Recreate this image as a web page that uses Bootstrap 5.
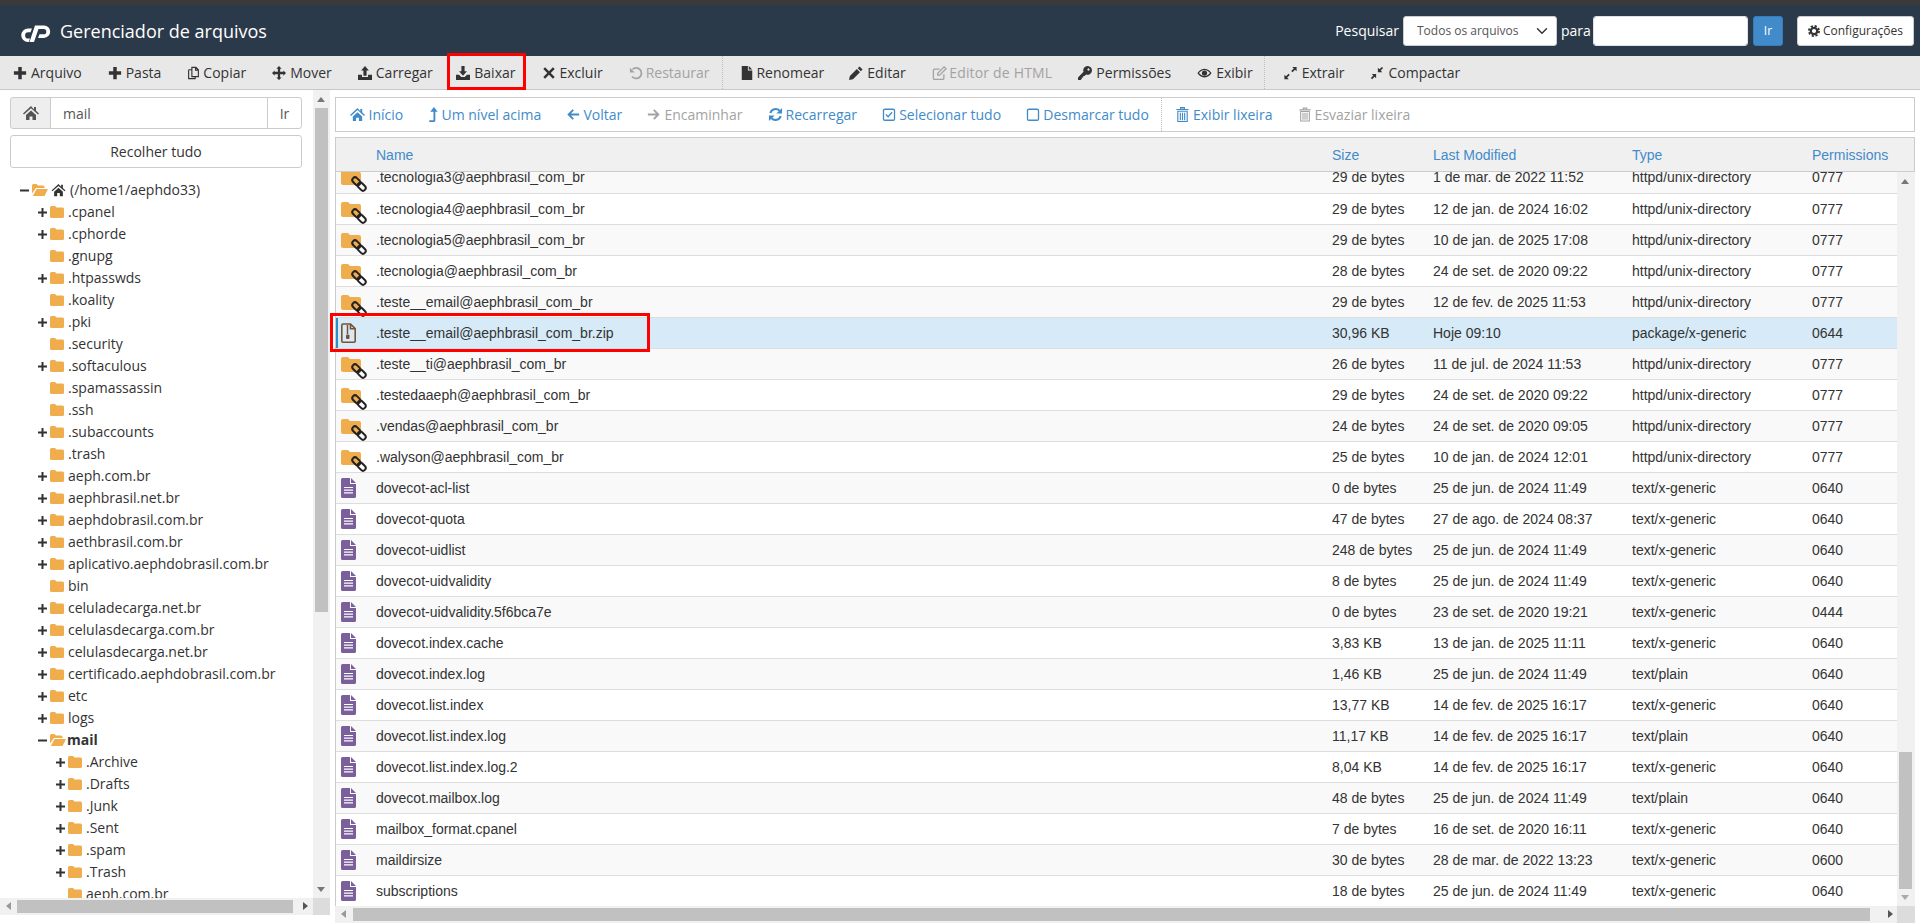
<!DOCTYPE html>
<html lang="pt-BR">
<head>
<meta charset="utf-8">
<title>Gerenciador de arquivos</title>
<link href="https://cdn.jsdelivr.net/npm/bootstrap@5.3.0/dist/css/bootstrap.min.css" rel="stylesheet">
<style>
html,body{height:923px;overflow:hidden}
body{font-family:"Open Sans",sans-serif;font-size:14px;color:#333;background:#fff;line-height:20px}
.sprites{position:absolute;width:0;height:0}
.top-strip{height:5px;background:#3a3a3a}
.fm-head{height:51px;background:#2b3a4a;color:#fff;padding:0 6px 0 21px}
.fm-logo{width:30px;height:17px;fill:#fff;margin:6px 9px 0 0}
.fm-title{font-size:18px;line-height:24px;font-weight:400}
.fm-search{gap:4px;font-size:14px}
.lb-para{width:28px;white-space:nowrap}
.fm-search .form-select{width:154px;flex:none;height:30px;font-size:12px;padding:0 24px 0 13px;border-radius:3px;color:#555;font-family:"Open Sans",sans-serif;border-color:#ccc;background-position:right 6px center}
.fm-search .form-control{width:155px;flex:none;height:30px;border-radius:3px;padding:0 8px}
.go-btn{width:30px;height:30px;padding:0;font-size:12px;border-radius:3px;background:#428bca;border-color:#357ebd;color:#fff;margin-left:1px}
.cfg-btn{width:117px;height:30px;padding:0;font-size:12px;border-radius:3px;background:#fff;border-color:#ccc;color:#333;margin-left:10px}
.cfg-btn svg{width:12px;height:12px;margin-right:3px;vertical-align:-2px;fill:#333}
.fm-tools{height:34px;background:#e8e8e8;border-bottom:1px solid #c8c8c8;padding-left:0}
.tb-btn{height:33px;padding:0 13px;border:0;border-radius:0;font-size:14px;line-height:33px;color:#333;white-space:nowrap;display:flex;align-items:center}
.tb-btn svg{width:14px;height:14px;margin-right:4px;fill:currentColor;flex:none}
.tb-btn .ic-copy{width:13px;margin-right:3px}
.tb-btn .ic-file{width:12px;margin-right:3px}
.tb-btn .ic-edit{width:15px;margin-right:2.5px}
.tb-btn .ic-eye,.tb-btn .ic-exp{width:15px}
.tb-btn .ic-x{margin-right:3px}
.tb-btn .ic-undo{margin-right:3px}
.tb-btn.tight-r{padding-right:12px}
.tb-btn.tighter-r{padding-right:11px}
.tb-btn.wide-txt{letter-spacing:.18px}
.tb-btn.off,.act-btn.off{color:#a3a3a3;opacity:1}
.tb-sep{width:0;height:33px;border-left:1px dotted #bdbdbd;margin:0 5px 0 0}
.tb-btn.hl-box{outline:3px solid #f00;outline-offset:0;height:31px;align-self:flex-start;padding:2px 8px 0 6px;margin:0 6px 0 4.5px;position:relative}
.fm-main{height:833px}
.side{width:335px;padding-right:5px;flex:none}
.side-body{height:808px}
.side-inner{width:313px;overflow:hidden}
.path-grp{margin:7px 11px 6px 10px;height:32px;width:292px}
.path-grp .input-group-text{width:41px;justify-content:center;background:#eee;border-color:#ccc;border-radius:3px 0 0 3px;padding:0;color:#555}
.path-grp .input-group-text svg{width:16px;height:16px;fill:#555}
.path-grp .form-control{font-size:14px;color:#555;padding:0 12px;border-color:#ccc;height:32px}
.path-grp .btn{width:35px;padding:0;font-size:14px;color:#555;background:#fff;border:1px solid #ccc;border-radius:0 3px 3px 0}
.collapse-btn{display:block;width:292px;height:33px;margin:0 0 0 10px;padding:0;background:#fff;border:1px solid #ccc;border-radius:3px;font-size:14px;color:#333}
.tree-list{margin-top:11px;height:719px;overflow:hidden}
.tr-row{height:22px;white-space:nowrap;color:#333;display:flex;align-items:center}
.lv0{padding-left:20px}.lv1{padding-left:38px}.lv2{padding-left:56px}
.tg{width:9px;height:9px;margin-right:3px;flex:none;stroke:#333;stroke-width:2}
.fd{width:14px;height:12px;margin-right:4px;fill:#f0ad4e;flex:none}
.fdo{width:16px;height:12px;margin-right:1px;fill:#f0ad4e;flex:none}
.hm{width:15px;height:14px;margin:0 4px 0 2px;fill:#333;flex:none}
.vbar{width:17px;background:#f1f1f1;flex:none;position:relative}
.vbar .thumb{position:absolute;left:2px;width:13px;background:#c1c1c1}
.hbar{height:17px;background:#f1f1f1;position:relative;flex:none}
.hbar .thumb{position:absolute;top:2px;height:13px;background:#c1c1c1}
.ar{position:absolute;width:0;height:0;border-style:solid;border-color:transparent}
.ar-up{left:4px;top:7px;border-width:0 4px 5px;border-bottom-color:#777}
.ar-dn{left:4px;bottom:6px;border-width:5px 4px 0;border-top-color:#777}
.ar-lt{left:6px;top:4px;border-width:4px 5px 4px 0;border-right-color:#999}
.ar-rt{top:4px;border-width:4px 0 4px 5px;border-left-color:#555}
.corner{position:absolute;right:0;top:0;width:17px;height:17px;background:#dcdcdc}
.corner.wide{width:18px}
.side-foot{height:8px}
.pane{padding-top:7px;width:1580px;flex:none}
.act-bar{height:35px;border:1px solid #ccc;margin-bottom:5px;padding-left:0;background:#fff}
.act-btn{height:33px;padding:0 12.6px;border:0;border-radius:0;font-size:14px;color:#428bca;white-space:nowrap;display:flex;align-items:center}
.act-btn svg{width:14px;height:15px;margin-right:3px;fill:currentColor;flex:none}
.act-btn .ic-hm{width:17px}
.act-btn .ic-lv{width:10px}
.act-btn .ic-15{width:15px}
.act-sep{height:33px;border-left:1px dotted #bdbdbd}
.thead-bar{height:35px;background:#f0f0f0;border:1px solid #ccc;border-bottom:1px solid #ccc}
.grid-tbl{table-layout:fixed;width:1561px;margin:0;font-family:"Liberation Sans",sans-serif;font-size:14px;color:#333;--bs-table-striped-bg:#f9f9f9;--bs-table-bg:transparent;--bs-table-accent-bg:transparent;--bs-table-color:#333;--bs-table-striped-color:#333;border-color:#ddd}
.grid-tbl td{height:31px;padding:0;vertical-align:middle;border-bottom:1px solid #ddd;white-space:nowrap;line-height:20px}
.hd-tbl{table-layout:fixed;width:1578px;font-family:"Liberation Sans",sans-serif;font-size:14px}
.hd-tbl th{height:33px;padding:0;font-weight:400;color:#428bca;vertical-align:middle}
.cw-i{width:40px}.cw-n{width:956px}.cw-s{width:101px}.cw-m{width:199px}.cw-t{width:180px}
.scroll-wrap{height:734px;border-left:1px solid #ccc;position:relative}
.scroll-pane{overflow:hidden;position:relative;width:1561px}
.scroll-shift{margin-top:-10px}
.rw-ico{display:block;margin:0 0 -1px 5px}
.ico-link{width:26px;height:31px}
.ico-txt,.ico-zip{width:15px;height:31px}
tr.pick>td{background:#d6eaf8!important;box-shadow:none!important}
tr.pick>td:first-child{box-shadow:inset 2px 0 0 #2a8fc9!important}
.zip-mark{position:absolute;left:-6px;top:141px;width:320px;height:39px;border:3px solid #f00;pointer-events:none}
.vbar18{width:18px}
</style>
</head>
<body>
<svg class="sprites" xmlns="http://www.w3.org/2000/svg">
<defs>
<symbol id="i-plus" viewBox="0 0 16 16"><path d="M6 1h4v5h5v4h-5v5H6v-5H1V6h5z"/></symbol>
<symbol id="i-copy" viewBox="0 0 16 16"><path d="M6 1h5l3 3v8.5H6z M2 4h4 M2 4v11h8v-2.500 M10.500 1v3.500H14" fill="none" stroke="currentColor" stroke-width="1.400"/></symbol>
<symbol id="i-move" viewBox="0 0 16 16"><path d="M8 0l3 3H9.300v3.700H13V5l3 3-3 3V9.300H9.300V13H11l-3 3-3-3h1.700V9.300H3V11L0 8l3-3v1.700h3.700V3H5z"/></symbol>
<symbol id="i-up" viewBox="0 0 16 16"><path d="M8 0l4.500 5H9.800v6H6.200V5H3.500z M0 10h4.500v2.500h7V10H16v6H0z"/></symbol>
<symbol id="i-down" viewBox="0 0 16 16"><path d="M6.200 0h3.600v6h2.700L8 11 3.500 6h2.700z M0 10h3.500L6 12.500h4L12.500 10H16v6H0z"/></symbol>
<symbol id="i-x" viewBox="0 0 16 16"><path d="M3.500 1.500L8 6l4.500-4.500 2 2L10 8l4.500 4.500-2 2L8 10l-4.500 4.500-2-2L6 8 1.500 3.500z"/></symbol>
<symbol id="i-undo" viewBox="0 0 16 16"><path d="M4 4A6 6 0 1 1 3.500 12" fill="none" stroke="currentColor" stroke-width="2"/><path d="M1 2v5.500h5.500z"/></symbol>
<symbol id="i-file" viewBox="0 0 12 16"><path d="M0 0h7v5h5v11H0z M8 0l4 4H8z"/></symbol>
<symbol id="i-pencil" viewBox="0 0 16 16"><path d="M12 .5l3.500 3.500-2 2L10 2.500z M9 3.500L12.500 7 4.500 15 0 16l1-4.500z"/></symbol>
<symbol id="i-edit" viewBox="0 0 16 16"><path d="M13 9.500V14a1.300 1.300 0 0 1-1.300 1.300H2.300A1.300 1.300 0 0 1 1 14V4.800a1.300 1.300 0 0 1 1.300-1.300H8" fill="none" stroke="currentColor" stroke-width="1.500"/><path d="M13.300 1l2.200 2.200L8.200 10.500H6V8.300z" fill="none" stroke="currentColor" stroke-width="1.500"/></symbol>
<symbol id="i-key" viewBox="0 0 16 16"><path fill-rule="evenodd" d="M11 0a5 5 0 1 1-1.800 9.700L7.500 11.400H6V13H4.400v1.600L3 16H0v-3l6.300-6.300A5 5 0 0 1 11 0z M12 2.700a1.300 1.300 0 1 0 .01 0z"/></symbol>
<symbol id="i-eye" viewBox="0 0 16 16"><path fill-rule="evenodd" d="M8 3C4 3 1.200 5.800 0 8c1.200 2.200 4 5 8 5s6.800-2.800 8-5c-1.200-2.200-4-5-8-5z M8 4.500c2.800 0 5 1.800 6.300 3.500-1.300 1.700-3.500 3.500-6.300 3.500S3 9.700 1.700 8C3 6.300 5.200 4.500 8 4.500z"/><circle cx="8" cy="8" r="3"/></symbol>
<symbol id="i-expand" viewBox="0 0 16 16"><path d="M10 1h5v5l-1.800-1.800-3 3-1.400-1.400 3-3z M6 15H1v-5l1.800 1.800 3-3 1.400 1.400-3 3z"/></symbol>
<symbol id="i-compress" viewBox="0 0 16 16"><path d="M9 7V2l1.800 1.800L13.600 1 15 2.400l-2.800 2.800L14 7z M7 9v5l-1.800-1.800L2.400 15 1 13.600l2.800-2.800L2 9z"/></symbol>
<symbol id="i-gear" viewBox="0 0 16 16"><circle cx="8" cy="8" r="4.300" fill="none" stroke="currentColor" stroke-width="3"/><circle cx="8" cy="8" r="6.800" fill="none" stroke="currentColor" stroke-width="2.400" stroke-dasharray="3 2.340"/></symbol>
<symbol id="i-home" viewBox="0 0 16 16"><path d="M8 1L0 8.500l1 1L8 3.300l7 6.200 1-1-3-2.800V2h-2v2.400z M3 10l5-4.500 5 4.500v5H9.500v-3.500h-3V15H3z"/></symbol>
<symbol id="i-level" viewBox="0 0 10 16"><path d="M6 0l4 5H7.500v9.500A1.500 1.500 0 0 1 6 16H1v-2h4.500V5H2z"/></symbol>
<symbol id="i-left" viewBox="0 0 16 16"><path d="M7.500 2L9 3.500 5.700 6.800H15v2.400H5.700L9 12.500 7.500 14 1.500 8z"/></symbol>
<symbol id="i-right" viewBox="0 0 16 16"><path d="M8.500 2L7 3.500l3.300 3.300H1v2.400h9.300L7 12.500 8.500 14l6-6z"/></symbol>
<symbol id="i-refresh" viewBox="0 0 16 16"><path d="M2.500 6.500A5.800 5.800 0 0 1 12.300 4 M13.500 9.500A5.800 5.800 0 0 1 3.700 12" fill="none" stroke="currentColor" stroke-width="2.200"/><path d="M15 1v6H9z M1 15V9h6z"/></symbol>
<symbol id="i-check" viewBox="0 0 16 16"><rect x="1.700" y="2" width="12.600" height="12.600" rx="1.500" fill="none" stroke="currentColor" stroke-width="1.500"/><path d="M4.500 8l2.500 2.500 4.500-5" fill="none" stroke="currentColor" stroke-width="1.500"/></symbol>
<symbol id="i-square" viewBox="0 0 16 16"><rect x="1.700" y="2" width="12.600" height="12.600" rx="1.500" fill="none" stroke="currentColor" stroke-width="1.500"/></symbol>
<symbol id="i-trash" viewBox="0 0 16 16"><path d="M6 .7h4v1.800H6z M1.500 2.700h13 M3 4.500h10V15.500H3z M5.700 6v8 M8 6v8 M10.300 6v8" fill="none" stroke="currentColor" stroke-width="1.200"/></symbol>
<symbol id="i-folder" viewBox="0 0 14 12"><path d="M0 1.500A1.500 1.500 0 0 1 1.500 0h3.500l1.500 1.500h6A1.500 1.500 0 0 1 14 3v7.500a1.500 1.500 0 0 1-1.500 1.500h-11A1.500 1.500 0 0 1 0 10.500z"/></symbol>
<symbol id="i-folder-open" viewBox="0 0 16 12"><path d="M0 1.500A1.500 1.500 0 0 1 1.500 0h3L6 1.500h5A1.500 1.500 0 0 1 12.500 3v1H4L0 9.500z M4.600 5H16l-3.500 7H.8z"/></symbol>
<symbol id="i-tp" viewBox="0 0 9 9"><path d="M0 4.500h9 M4.500 0v9"/></symbol>
<symbol id="i-tm" viewBox="0 0 9 9"><path d="M0 4.500h9"/></symbol>
<symbol id="i-flink" viewBox="0 0 26 31"><path fill="#f0ad4e" d="M0 10a2 2 0 0 1 2-2h5l2 2h9a2 2 0 0 1 2 2v9a2 2 0 0 1-2 2H2a2 2 0 0 1-2-2z"/><g fill="none" stroke="#222" stroke-width="2"><rect x="10.800" y="16.600" width="9" height="5.400" rx="2.700" transform="rotate(45 15.300 19.300)"/><rect x="16.200" y="22" width="9" height="5.400" rx="2.700" transform="rotate(45 20.700 24.700)"/></g></symbol>
<symbol id="i-ftxt" viewBox="0 0 15 31"><path fill="#7a5f9a" d="M1.500 5H9v6h6v12.500a1.500 1.500 0 0 1-1.500 1.500h-12A1.500 1.500 0 0 1 0 23.500v-17A1.500 1.500 0 0 1 1.500 5z M10 5l5 5h-5z"/><path stroke="#fff" stroke-width="1.200" d="M3 14.500h9 M3 17.200h9 M3 19.900h9"/></symbol>
<symbol id="i-fzip" viewBox="0 0 15 31"><path fill="none" stroke="#7a5230" stroke-width="1.600" d="M2 6h7.500l4.700 4.700V23a1.200 1.200 0 0 1-1.200 1.200H2A1.200 1.200 0 0 1 .8 23V7.200A1.200 1.200 0 0 1 2 6z M9.500 6v4.700h4.700"/><path stroke="#7a5230" stroke-width="1.500" d="M6.500 7v9"/><rect x="5" y="16.500" width="3.500" height="4.500" rx="1" fill="#7a5230"/></symbol>
</defs>
</svg>

<div class="top-strip"></div>
<header class="fm-head d-flex align-items-center justify-content-between">
  <div class="d-flex align-items-center">
    <svg class="fm-logo" viewBox="0 0 30 17"><path d="M11 3.500H7A6.700 6.700 0 0 0 7 17h.8L9 13.500H7.200a3.100 3.100 0 0 1 0-6.200H9.500z M14 .5h9a6.200 6.200 0 0 1 0 12.400h-6l1.500-3.600h4.200a2.600 2.600 0 0 0 0-5.200h-5.200L13 17H8.500z"/></svg>
    <span class="fm-title">Gerenciador de arquivos</span>
  </div>
  <form class="fm-search d-flex align-items-center m-0">
    <label>Pesquisar</label>
    <select class="form-select"><option>Todos os arquivos</option></select>
    <label class="lb-para">para</label>
    <input class="form-control" type="text">
    <button type="button" class="btn go-btn">Ir</button>
    <button type="button" class="btn cfg-btn"><svg><use href="#i-gear"/></svg>Configurações</button>
  </form>
</header>
<nav class="fm-tools d-flex align-items-center">
  <button class="btn tb-btn"><svg><use href="#i-plus"/></svg>Arquivo</button>
  <button class="btn tb-btn"><svg><use href="#i-plus"/></svg>Pasta</button>
  <button class="btn tb-btn"><svg class="ic-copy"><use href="#i-copy"/></svg>Copiar</button>
  <button class="btn tb-btn"><svg><use href="#i-move"/></svg>Mover</button>
  <button class="btn tb-btn"><svg><use href="#i-up"/></svg>Carregar</button>
  <button class="btn tb-btn hl-box"><svg><use href="#i-down"/></svg>Baixar</button>
  <button class="btn tb-btn"><svg class="ic-x"><use href="#i-x"/></svg>Excluir</button>
  <button class="btn tb-btn off"><svg class="ic-undo"><use href="#i-undo"/></svg>Restaurar</button>
  <span class="tb-sep"></span>
  <button class="btn tb-btn tight-r"><svg class="ic-file"><use href="#i-file"/></svg>Renomear</button>
  <button class="btn tb-btn"><svg><use href="#i-pencil"/></svg>Editar</button>
  <button class="btn tb-btn off wide-txt"><svg class="ic-edit"><use href="#i-edit"/></svg>Editor de HTML</button>
  <button class="btn tb-btn"><svg><use href="#i-key"/></svg>Permissões</button>
  <button class="btn tb-btn tighter-r"><svg class="ic-eye"><use href="#i-eye"/></svg>Exibir</button>
  <span class="tb-sep"></span>
  <button class="btn tb-btn"><svg class="ic-exp"><use href="#i-expand"/></svg>Extrair</button>
  <button class="btn tb-btn"><svg><use href="#i-compress"/></svg>Compactar</button>
</nav>

<main class="fm-main d-flex">
  <aside class="side d-flex flex-column">
    <div class="side-body d-flex">
      <div class="side-inner">
        <div class="input-group path-grp">
          <span class="input-group-text"><svg><use href="#i-home"/></svg></span>
          <input class="form-control" type="text" value="mail">
          <button class="btn" type="button">Ir</button>
        </div>
        <button class="btn collapse-btn" type="button">Recolher tudo</button>
        <div class="tree-list">
          <div class="tr-row lv0"><svg class="tg"><use href="#i-tm"/></svg><svg class="fdo"><use href="#i-folder-open"/></svg><svg class="hm"><use href="#i-home"/></svg>(/home1/aephdo33)</div>
          <div class="tr-row lv1"><svg class="tg"><use href="#i-tp"/></svg><svg class="fd"><use href="#i-folder"/></svg>.cpanel</div>
          <div class="tr-row lv1"><svg class="tg"><use href="#i-tp"/></svg><svg class="fd"><use href="#i-folder"/></svg>.cphorde</div>
          <div class="tr-row lv1"><svg class="tg"></svg><svg class="fd"><use href="#i-folder"/></svg>.gnupg</div>
          <div class="tr-row lv1"><svg class="tg"><use href="#i-tp"/></svg><svg class="fd"><use href="#i-folder"/></svg>.htpasswds</div>
          <div class="tr-row lv1"><svg class="tg"></svg><svg class="fd"><use href="#i-folder"/></svg>.koality</div>
          <div class="tr-row lv1"><svg class="tg"><use href="#i-tp"/></svg><svg class="fd"><use href="#i-folder"/></svg>.pki</div>
          <div class="tr-row lv1"><svg class="tg"></svg><svg class="fd"><use href="#i-folder"/></svg>.security</div>
          <div class="tr-row lv1"><svg class="tg"><use href="#i-tp"/></svg><svg class="fd"><use href="#i-folder"/></svg>.softaculous</div>
          <div class="tr-row lv1"><svg class="tg"></svg><svg class="fd"><use href="#i-folder"/></svg>.spamassassin</div>
          <div class="tr-row lv1"><svg class="tg"></svg><svg class="fd"><use href="#i-folder"/></svg>.ssh</div>
          <div class="tr-row lv1"><svg class="tg"><use href="#i-tp"/></svg><svg class="fd"><use href="#i-folder"/></svg>.subaccounts</div>
          <div class="tr-row lv1"><svg class="tg"></svg><svg class="fd"><use href="#i-folder"/></svg>.trash</div>
          <div class="tr-row lv1"><svg class="tg"><use href="#i-tp"/></svg><svg class="fd"><use href="#i-folder"/></svg>aeph.com.br</div>
          <div class="tr-row lv1"><svg class="tg"><use href="#i-tp"/></svg><svg class="fd"><use href="#i-folder"/></svg>aephbrasil.net.br</div>
          <div class="tr-row lv1"><svg class="tg"><use href="#i-tp"/></svg><svg class="fd"><use href="#i-folder"/></svg>aephdobrasil.com.br</div>
          <div class="tr-row lv1"><svg class="tg"><use href="#i-tp"/></svg><svg class="fd"><use href="#i-folder"/></svg>aethbrasil.com.br</div>
          <div class="tr-row lv1"><svg class="tg"><use href="#i-tp"/></svg><svg class="fd"><use href="#i-folder"/></svg>aplicativo.aephdobrasil.com.br</div>
          <div class="tr-row lv1"><svg class="tg"></svg><svg class="fd"><use href="#i-folder"/></svg>bin</div>
          <div class="tr-row lv1"><svg class="tg"><use href="#i-tp"/></svg><svg class="fd"><use href="#i-folder"/></svg>celuladecarga.net.br</div>
          <div class="tr-row lv1"><svg class="tg"><use href="#i-tp"/></svg><svg class="fd"><use href="#i-folder"/></svg>celulasdecarga.com.br</div>
          <div class="tr-row lv1"><svg class="tg"><use href="#i-tp"/></svg><svg class="fd"><use href="#i-folder"/></svg>celulasdecarga.net.br</div>
          <div class="tr-row lv1"><svg class="tg"><use href="#i-tp"/></svg><svg class="fd"><use href="#i-folder"/></svg>certificado.aephdobrasil.com.br</div>
          <div class="tr-row lv1"><svg class="tg"><use href="#i-tp"/></svg><svg class="fd"><use href="#i-folder"/></svg>etc</div>
          <div class="tr-row lv1"><svg class="tg"><use href="#i-tp"/></svg><svg class="fd"><use href="#i-folder"/></svg>logs</div>
          <div class="tr-row lv1 fw-bold"><svg class="tg"><use href="#i-tm"/></svg><svg class="fdo"><use href="#i-folder-open"/></svg>mail</div>
          <div class="tr-row lv2"><svg class="tg"><use href="#i-tp"/></svg><svg class="fd"><use href="#i-folder"/></svg>.Archive</div>
          <div class="tr-row lv2"><svg class="tg"><use href="#i-tp"/></svg><svg class="fd"><use href="#i-folder"/></svg>.Drafts</div>
          <div class="tr-row lv2"><svg class="tg"><use href="#i-tp"/></svg><svg class="fd"><use href="#i-folder"/></svg>.Junk</div>
          <div class="tr-row lv2"><svg class="tg"><use href="#i-tp"/></svg><svg class="fd"><use href="#i-folder"/></svg>.Sent</div>
          <div class="tr-row lv2"><svg class="tg"><use href="#i-tp"/></svg><svg class="fd"><use href="#i-folder"/></svg>.spam</div>
          <div class="tr-row lv2"><svg class="tg"><use href="#i-tp"/></svg><svg class="fd"><use href="#i-folder"/></svg>.Trash</div>
          <div class="tr-row lv2"><svg class="tg"></svg><svg class="fd"><use href="#i-folder"/></svg>aeph.com.br</div>
        </div>
      </div>
      <div class="vbar flex-grow-0" aria-hidden="true">
        <span class="ar ar-up"></span>
        <span class="thumb" style="top:18px;height:504px"></span>
        <span class="ar ar-dn"></span>
      </div>
    </div>
    <div class="hbar" aria-hidden="true">
      <span class="ar ar-lt"></span>
      <span class="thumb" style="left:17px;width:276px"></span>
      <span class="ar ar-rt" style="left:303px"></span>
      <span class="corner"></span>
    </div>
    <div class="side-foot"></div>
  </aside>

  <section class="pane d-flex flex-column">
    <div class="act-bar d-flex align-items-center">
      <button class="btn act-btn"><svg class="ic-hm"><use href="#i-home"/></svg>Início</button>
      <button class="btn act-btn"><svg class="ic-lv"><use href="#i-level"/></svg>Um nível acima</button>
      <button class="btn act-btn"><svg><use href="#i-left"/></svg>Voltar</button>
      <button class="btn act-btn off"><svg><use href="#i-right"/></svg>Encaminhar</button>
      <button class="btn act-btn"><svg class="ic-15"><use href="#i-refresh"/></svg>Recarregar</button>
      <button class="btn act-btn"><svg><use href="#i-check"/></svg>Selecionar tudo</button>
      <button class="btn act-btn"><svg><use href="#i-square"/></svg>Desmarcar tudo</button>
      <span class="act-sep"></span>
      <button class="btn act-btn"><svg class="ic-15"><use href="#i-trash"/></svg>Exibir lixeira</button>
      <button class="btn act-btn off"><svg><use href="#i-trash"/></svg>Esvaziar lixeira</button>
    </div>
    <div class="thead-bar">
      <table class="hd-tbl"><colgroup><col class="cw-i"><col class="cw-n"><col class="cw-s"><col class="cw-m"><col class="cw-t"><col></colgroup>
        <thead><tr><th></th><th>Name</th><th>Size</th><th>Last Modified</th><th>Type</th><th>Permissions</th></tr></thead>
      </table>
    </div>
    <div class="scroll-wrap d-flex">
      <div class="scroll-pane">
        <div class="scroll-shift">
        <table class="table table-striped grid-tbl"><colgroup><col class="cw-i"><col class="cw-n"><col class="cw-s"><col class="cw-m"><col class="cw-t"><col></colgroup>
        <tbody>
          <tr><td><svg class="rw-ico ico-link"><use href="#i-flink"/></svg></td><td>.tecnologia3@aephbrasil_com_br</td><td>29 de bytes</td><td>1 de mar. de 2022 11:52</td><td>httpd/unix-directory</td><td>0777</td></tr>
          <tr><td><svg class="rw-ico ico-link"><use href="#i-flink"/></svg></td><td>.tecnologia4@aephbrasil_com_br</td><td>29 de bytes</td><td>12 de jan. de 2024 16:02</td><td>httpd/unix-directory</td><td>0777</td></tr>
          <tr><td><svg class="rw-ico ico-link"><use href="#i-flink"/></svg></td><td>.tecnologia5@aephbrasil_com_br</td><td>29 de bytes</td><td>10 de jan. de 2025 17:08</td><td>httpd/unix-directory</td><td>0777</td></tr>
          <tr><td><svg class="rw-ico ico-link"><use href="#i-flink"/></svg></td><td>.tecnologia@aephbrasil_com_br</td><td>28 de bytes</td><td>24 de set. de 2020 09:22</td><td>httpd/unix-directory</td><td>0777</td></tr>
          <tr><td><svg class="rw-ico ico-link"><use href="#i-flink"/></svg></td><td>.teste__email@aephbrasil_com_br</td><td>29 de bytes</td><td>12 de fev. de 2025 11:53</td><td>httpd/unix-directory</td><td>0777</td></tr>
          <tr class="pick"><td><svg class="rw-ico ico-zip"><use href="#i-fzip"/></svg></td><td>.teste__email@aephbrasil_com_br.zip</td><td>30,96 KB</td><td>Hoje 09:10</td><td>package/x-generic</td><td>0644</td></tr>
          <tr><td><svg class="rw-ico ico-link"><use href="#i-flink"/></svg></td><td>.teste__ti@aephbrasil_com_br</td><td>26 de bytes</td><td>11 de jul. de 2024 11:53</td><td>httpd/unix-directory</td><td>0777</td></tr>
          <tr><td><svg class="rw-ico ico-link"><use href="#i-flink"/></svg></td><td>.testedaaeph@aephbrasil_com_br</td><td>29 de bytes</td><td>24 de set. de 2020 09:22</td><td>httpd/unix-directory</td><td>0777</td></tr>
          <tr><td><svg class="rw-ico ico-link"><use href="#i-flink"/></svg></td><td>.vendas@aephbrasil_com_br</td><td>24 de bytes</td><td>24 de set. de 2020 09:05</td><td>httpd/unix-directory</td><td>0777</td></tr>
          <tr><td><svg class="rw-ico ico-link"><use href="#i-flink"/></svg></td><td>.walyson@aephbrasil_com_br</td><td>25 de bytes</td><td>10 de jan. de 2024 12:01</td><td>httpd/unix-directory</td><td>0777</td></tr>
          <tr><td><svg class="rw-ico ico-txt"><use href="#i-ftxt"/></svg></td><td>dovecot-acl-list</td><td>0 de bytes</td><td>25 de jun. de 2024 11:49</td><td>text/x-generic</td><td>0640</td></tr>
          <tr><td><svg class="rw-ico ico-txt"><use href="#i-ftxt"/></svg></td><td>dovecot-quota</td><td>47 de bytes</td><td>27 de ago. de 2024 08:37</td><td>text/x-generic</td><td>0640</td></tr>
          <tr><td><svg class="rw-ico ico-txt"><use href="#i-ftxt"/></svg></td><td>dovecot-uidlist</td><td>248 de bytes</td><td>25 de jun. de 2024 11:49</td><td>text/x-generic</td><td>0640</td></tr>
          <tr><td><svg class="rw-ico ico-txt"><use href="#i-ftxt"/></svg></td><td>dovecot-uidvalidity</td><td>8 de bytes</td><td>25 de jun. de 2024 11:49</td><td>text/x-generic</td><td>0640</td></tr>
          <tr><td><svg class="rw-ico ico-txt"><use href="#i-ftxt"/></svg></td><td>dovecot-uidvalidity.5f6bca7e</td><td>0 de bytes</td><td>23 de set. de 2020 19:21</td><td>text/x-generic</td><td>0444</td></tr>
          <tr><td><svg class="rw-ico ico-txt"><use href="#i-ftxt"/></svg></td><td>dovecot.index.cache</td><td>3,83 KB</td><td>13 de jan. de 2025 11:11</td><td>text/x-generic</td><td>0640</td></tr>
          <tr><td><svg class="rw-ico ico-txt"><use href="#i-ftxt"/></svg></td><td>dovecot.index.log</td><td>1,46 KB</td><td>25 de jun. de 2024 11:49</td><td>text/plain</td><td>0640</td></tr>
          <tr><td><svg class="rw-ico ico-txt"><use href="#i-ftxt"/></svg></td><td>dovecot.list.index</td><td>13,77 KB</td><td>14 de fev. de 2025 16:17</td><td>text/x-generic</td><td>0640</td></tr>
          <tr><td><svg class="rw-ico ico-txt"><use href="#i-ftxt"/></svg></td><td>dovecot.list.index.log</td><td>11,17 KB</td><td>14 de fev. de 2025 16:17</td><td>text/plain</td><td>0640</td></tr>
          <tr><td><svg class="rw-ico ico-txt"><use href="#i-ftxt"/></svg></td><td>dovecot.list.index.log.2</td><td>8,04 KB</td><td>14 de fev. de 2025 16:17</td><td>text/x-generic</td><td>0640</td></tr>
          <tr><td><svg class="rw-ico ico-txt"><use href="#i-ftxt"/></svg></td><td>dovecot.mailbox.log</td><td>48 de bytes</td><td>25 de jun. de 2024 11:49</td><td>text/plain</td><td>0640</td></tr>
          <tr><td><svg class="rw-ico ico-txt"><use href="#i-ftxt"/></svg></td><td>mailbox_format.cpanel</td><td>7 de bytes</td><td>16 de set. de 2020 16:11</td><td>text/x-generic</td><td>0640</td></tr>
          <tr><td><svg class="rw-ico ico-txt"><use href="#i-ftxt"/></svg></td><td>maildirsize</td><td>30 de bytes</td><td>28 de mar. de 2022 13:23</td><td>text/x-generic</td><td>0600</td></tr>
          <tr><td><svg class="rw-ico ico-txt"><use href="#i-ftxt"/></svg></td><td>subscriptions</td><td>18 de bytes</td><td>25 de jun. de 2024 11:49</td><td>text/x-generic</td><td>0640</td></tr>
        </tbody></table>
        </div>
      </div>
      <div class="vbar vbar18" aria-hidden="true">
        <span class="ar ar-up"></span>
        <span class="thumb" style="top:580px;height:137px"></span>
        <span class="ar ar-dn" style="border-top-color:#aaa"></span>
      </div>
      <div class="zip-mark" aria-hidden="true"></div>
    </div>
    <div class="hbar" aria-hidden="true">
      <span class="ar ar-lt"></span>
      <span class="thumb" style="left:18px;width:1517px"></span>
      <span class="ar ar-rt" style="left:1553px"></span>
      <span class="corner wide"></span>
    </div>
  </section>
</main>
<script src="https://cdn.jsdelivr.net/npm/bootstrap@5.3.0/dist/js/bootstrap.bundle.min.js"></script>
</body>
</html>
